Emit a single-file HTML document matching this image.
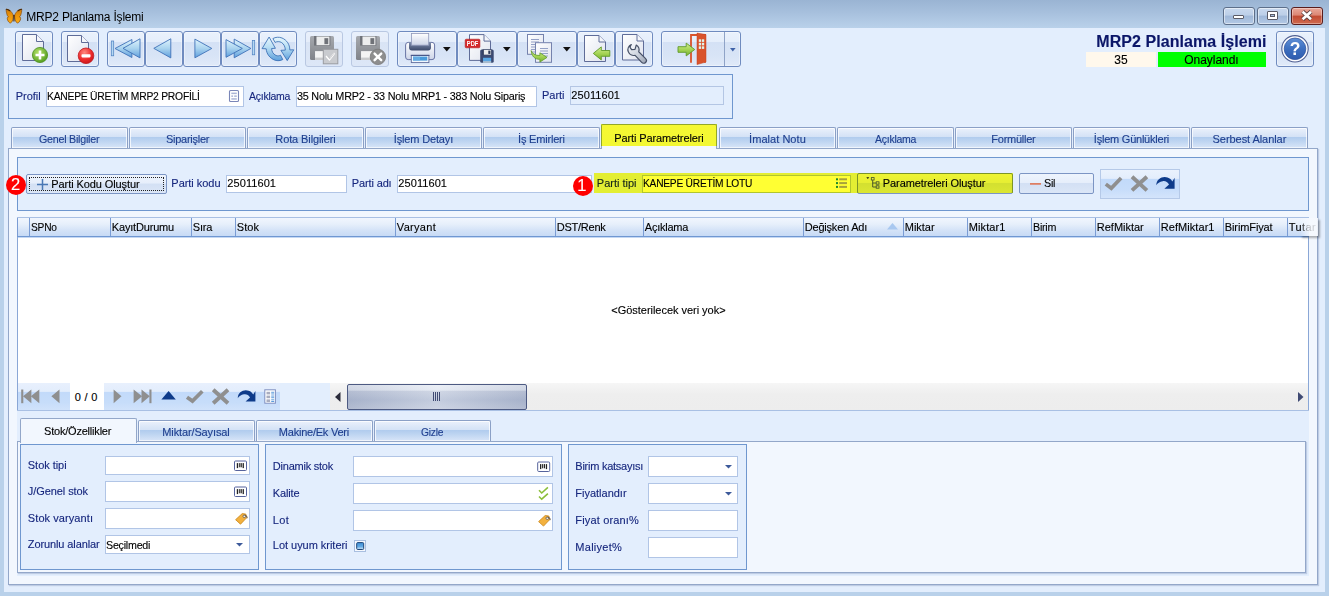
<!DOCTYPE html>
<html lang="tr"><head><meta charset="utf-8"><title>MRP2 Planlama İşlemi</title>
<style>
html,body{margin:0;padding:0;}
body{width:1329px;height:596px;overflow:hidden;position:relative;background:#e3eefd;font-family:"Liberation Sans", sans-serif;font-size:11px;}
body div{position:absolute;box-sizing:border-box;}
body svg{position:absolute;overflow:visible;}
.t{position:absolute;white-space:pre;transform-origin:0 50%;-webkit-text-stroke:0.12px;}

.tb{border:1px solid #6f8bbf;border-radius:3px;background:linear-gradient(#eaf1fc 0,#e5eefb 28%,#d4e1f5 30%,#d8e4f6 70%,#e0eaf9 100%);box-shadow:inset 0 0 0 1px rgba(255,255,255,.4);}
.tbd{border:1px solid #b9c8e2;border-radius:3px;background:linear-gradient(#e9f0fb 0,#e5edfa 28%,#d9e4f5 30%,#dde7f7 100%);}
.tab{border:1px solid #8ba0c6;border-bottom:none;border-radius:2px 2px 0 0;background:linear-gradient(#ebf1fc 0,#dde8f8 25%,#d4e2f6 44%,#b1ccee 47%,#bdd4f1 65%,#d8e5f8 100%);box-shadow:inset 1px 1px 0 rgba(255,255,255,.75), inset -1px 0 0 rgba(255,255,255,.75), inset 0 -1px 0 rgba(255,255,255,.6);}
.inp{border:1px solid #b1c5e6;background:#fff;}
.btn{border:1px solid #7c95c4;border-radius:2px;background:linear-gradient(#eef4fd 0,#e6eefb 45%,#d3e0f4 50%,#dbe6f7 100%);}
.grp{border:1px solid #6f97cf;background:#e3eefd;}
.hd{background:linear-gradient(#f1f6fe 0,#e6effb 35%,#d3e2f7 70%,#c7daf5 100%);border-left:1px solid #7a9cd4;}

</style></head><body>
<div style="left:0px;top:0px;width:1329px;height:596px;background:#b9d1ea;"></div>
<div style="left:0px;top:0px;width:1329px;height:28px;background:linear-gradient(#9ab4d3 0,#a7c0dd 45%,#b9d1ea 100%);"></div>
<div style="left:4px;top:28px;width:1321px;height:564px;background:#e3eefd;"></div>
<span class="t" id="t0" style="left:26.28px;top:11px;font-size:12px;line-height:12px;color:#000;letter-spacing:-0.203px;-webkit-text-stroke:0;">MRP2 Planlama İşlemi</span>
<div style="left:1223px;top:7px;width:32px;height:18px;border:1px solid #5d6f8a;border-radius:3px;background:linear-gradient(#c9d9ee 0,#bccfe8 45%,#9fb8d9 50%,#b3c9e5 100%);box-shadow:inset 0 0 0 1px rgba(255,255,255,.5);"></div>
<div style="left:1257px;top:7px;width:32px;height:18px;border:1px solid #5d6f8a;border-radius:3px;background:linear-gradient(#c9d9ee 0,#bccfe8 45%,#9fb8d9 50%,#b3c9e5 100%);box-shadow:inset 0 0 0 1px rgba(255,255,255,.5);"></div>
<div style="left:1291px;top:7px;width:32px;height:18px;border:1px solid #5a1d1c;border-radius:3px;background:linear-gradient(#e9a99b 0,#dc8674 45%,#c24a32 50%,#cf6a4f 100%);box-shadow:inset 0 0 0 1px rgba(255,255,255,.35);"></div>
<div style="left:1233px;top:15px;width:11px;height:4px;background:#fff;border:1px solid #5b5b66;border-radius:1px;"></div>
<div style="left:1267px;top:11px;width:11px;height:9px;background:#fff;border:1px solid #5b5b66;border-radius:1px;"></div>
<div style="left:1270px;top:14px;width:5px;height:3px;background:#a9bfdd;border:1px solid #5b5b66;"></div>
<svg style="left:1300px;top:10px" width="14" height="11" viewBox="0 0 14 11"><path d="M2.6 1.700L11 9.300M11 1.700L2.600 9.300" stroke="#5a4040" stroke-width="4.300" fill="none"/><path d="M2.600 1.700L11 9.300M11 1.700L2.600 9.300" stroke="#fff" stroke-width="2.700" fill="none"/></svg>
<div class="tb" style="left:15px;top:31px;width:38px;height:36px"></div>
<div class="tb" style="left:61px;top:31px;width:38px;height:36px"></div>
<div class="tb" style="left:107px;top:31px;width:38px;height:36px"></div>
<div class="tb" style="left:145px;top:31px;width:38px;height:36px"></div>
<div class="tb" style="left:183px;top:31px;width:38px;height:36px"></div>
<div class="tb" style="left:221px;top:31px;width:38px;height:36px"></div>
<div class="tb" style="left:259px;top:31px;width:38px;height:36px"></div>
<div class="tbd" style="left:305px;top:31px;width:38px;height:36px"></div>
<div class="tbd" style="left:351px;top:31px;width:38px;height:36px"></div>
<div class="tb" style="left:397px;top:31px;width:60px;height:36px"></div>
<div class="tb" style="left:457px;top:31px;width:60px;height:36px"></div>
<div class="tb" style="left:517px;top:31px;width:60px;height:36px"></div>
<div class="tb" style="left:577px;top:31px;width:38px;height:36px"></div>
<div class="tb" style="left:615px;top:31px;width:38px;height:36px"></div>
<div class="tb" style="left:661px;top:31px;width:80px;height:36px"></div>
<div class="tb" style="left:1276px;top:31px;width:38px;height:36px"></div>
<div style="left:724px;top:32px;width:1px;height:34px;background:#8fa3c7;"></div>
<svg style="left:442.6px;top:46.900px" width="8" height="5"><path d="M0 0h7.6L3.8 4.4z" fill="#111"/></svg>
<svg style="left:502.6px;top:46.900px" width="8" height="5"><path d="M0 0h7.6L3.8 4.4z" fill="#111"/></svg>
<svg style="left:562.6px;top:46.900px" width="8" height="5"><path d="M0 0h7.6L3.8 4.4z" fill="#111"/></svg>
<svg style="left:730px;top:48px" width="6" height="4"><path d="M0 0h5.600L2.800 3.600z" fill="#3f62a8"/></svg>
<span class="t" id="t1" style="left:1096.34px;top:34px;font-size:16px;line-height:16px;color:#0b1668;font-weight:bold;letter-spacing:0.065px;">MRP2 Planlama İşlemi</span>
<div style="left:1086px;top:52px;width:70px;height:15px;background:#fff8ec;"></div>
<div style="left:1158px;top:52px;width:108px;height:15px;background:#00ff00;"></div>
<span class="t" id="t2" style="left:1114.28px;top:54px;font-size:12px;line-height:12px;color:#000;letter-spacing:-0.020px;">35</span>
<span class="t" id="t3" style="left:1184.28px;top:54px;font-size:12px;line-height:12px;color:#000;letter-spacing:-0.043px;">Onaylandı</span>
<div style="left:8px;top:74px;width:725px;height:45px;border:1px solid #6f97cf;background:#e3eefd;"></div>
<span class="t" id="t4" style="left:15.84px;top:91px;font-size:11px;line-height:11px;color:#17277e;letter-spacing:-0.059px;">Profil</span>
<div class="inp" style="left:46px;top:86px;width:198px;height:21px"></div>
<span class="t" id="t5" style="left:47.34px;top:91px;font-size:11px;line-height:11px;color:#000;letter-spacing:-0.250px;transform:scaleX(0.9380);">KANEPE ÜRETİM MRP2 PROFİLİ</span>
<span class="t" id="t6" style="left:249.34px;top:91px;font-size:11px;line-height:11px;color:#17277e;letter-spacing:-0.250px;transform:scaleX(0.9528);">Açıklama</span>
<div class="inp" style="left:296px;top:86px;width:241px;height:21px"></div>
<span class="t" id="t7" style="left:297.34px;top:91px;font-size:11px;line-height:11px;color:#000;letter-spacing:-0.250px;transform:scaleX(0.9844);">35 Nolu MRP2 - 33 Nolu MRP1 - 383 Nolu Sipariş</span>
<span class="t" id="t8" style="left:542.04px;top:90px;font-size:11px;line-height:11px;color:#17277e;letter-spacing:-0.023px;">Parti</span>
<div style="left:570px;top:86px;width:154px;height:19px;border:1px solid #b4c6e4;background:#e3eefd"></div>
<span class="t" id="t9" style="left:571.34px;top:90px;font-size:11px;line-height:11px;color:#000;letter-spacing:0.073px;">25011601</span>
<div style="left:8px;top:148px;width:1310px;height:437px;border:1px solid #93a7c9;background:#f2f7fe;box-shadow:1px 1px 1px rgba(120,140,180,.35);"></div>
<div class="tab" style="left:11px;top:127px;width:117px;height:21px"></div>
<span class="t" id="t10" style="left:39.34px;top:134px;font-size:11px;line-height:11px;color:#1f3f8f;letter-spacing:-0.250px;transform:scaleX(0.9724);">Genel Bilgiler</span>
<div class="tab" style="left:129px;top:127px;width:117px;height:21px"></div>
<span class="t" id="t11" style="left:165.84px;top:134px;font-size:11px;line-height:11px;color:#1f3f8f;letter-spacing:-0.250px;transform:scaleX(0.9966);">Siparişler</span>
<div class="tab" style="left:247px;top:127px;width:117px;height:21px"></div>
<span class="t" id="t12" style="left:275.34px;top:134px;font-size:11px;line-height:11px;color:#1f3f8f;letter-spacing:-0.110px;">Rota Bilgileri</span>
<div class="tab" style="left:365px;top:127px;width:117px;height:21px"></div>
<span class="t" id="t13" style="left:393.84px;top:134px;font-size:11px;line-height:11px;color:#1f3f8f;letter-spacing:-0.161px;">İşlem Detayı</span>
<div class="tab" style="left:483px;top:127px;width:117px;height:21px"></div>
<span class="t" id="t14" style="left:518.09px;top:134px;font-size:11px;line-height:11px;color:#1f3f8f;letter-spacing:-0.198px;">İş Emirleri</span>
<div style="left:601px;top:124px;width:116px;height:25px;border:1px solid #93a7c9;border-bottom:none;border-radius:2px 2px 0 0;background:linear-gradient(#f6f8fd,#f2f7fe);"></div>
<span class="t" id="t15" style="left:614.34px;top:133px;font-size:11px;line-height:11px;color:#000;letter-spacing:-0.131px;">Parti Parametreleri</span>
<div class="tab" style="left:719px;top:127px;width:117px;height:21px"></div>
<span class="t" id="t16" style="left:749.09px;top:134px;font-size:11px;line-height:11px;color:#1f3f8f;letter-spacing:0.042px;">İmalat Notu</span>
<div class="tab" style="left:837px;top:127px;width:117px;height:21px"></div>
<span class="t" id="t17" style="left:874.84px;top:134px;font-size:11px;line-height:11px;color:#1f3f8f;letter-spacing:-0.250px;transform:scaleX(0.9528);">Açıklama</span>
<div class="tab" style="left:955px;top:127px;width:117px;height:21px"></div>
<span class="t" id="t18" style="left:991.34px;top:134px;font-size:11px;line-height:11px;color:#1f3f8f;letter-spacing:-0.249px;">Formüller</span>
<div class="tab" style="left:1073px;top:127px;width:117px;height:21px"></div>
<span class="t" id="t19" style="left:1093.84px;top:134px;font-size:11px;line-height:11px;color:#1f3f8f;letter-spacing:-0.228px;">İşlem Günlükleri</span>
<div class="tab" style="left:1191px;top:127px;width:117px;height:21px"></div>
<span class="t" id="t20" style="left:1212.59px;top:134px;font-size:11px;line-height:11px;color:#1f3f8f;letter-spacing:-0.060px;">Serbest Alanlar</span>
<div style="left:17px;top:157px;width:1292px;height:54px;border:1px solid #6f97cf;background:#e3eefd;"></div>
<div class="btn" style="left:26px;top:174px;width:141px;height:20px"></div>
<div style="left:29px;top:177px;width:135px;height:14px;border:1px dotted #222;"></div>
<svg style="left:37px;top:179px" width="11" height="11"><path d="M5.5 0v11M0 5.5h11" stroke="#4a78b5" stroke-width="1.5"/></svg>
<span class="t" id="t21" style="left:51.34px;top:179px;font-size:11px;line-height:11px;color:#000;letter-spacing:-0.093px;">Parti Kodu Oluştur</span>
<span class="t" id="t22" style="left:171.34px;top:178px;font-size:11px;line-height:11px;color:#17277e;letter-spacing:-0.032px;">Parti kodu</span>
<div class="inp" style="left:226px;top:175px;width:121px;height:18px"></div>
<span class="t" id="t23" style="left:227.34px;top:178px;font-size:11px;line-height:11px;color:#000;letter-spacing:0.073px;">25011601</span>
<span class="t" id="t24" style="left:351.84px;top:178px;font-size:11px;line-height:11px;color:#17277e;letter-spacing:-0.140px;">Parti adı</span>
<div class="inp" style="left:397px;top:175px;width:195px;height:18px"></div>
<span class="t" id="t25" style="left:398.34px;top:178px;font-size:11px;line-height:11px;color:#000;letter-spacing:0.073px;">25011601</span>
<span class="t" id="t26" style="left:596.84px;top:178px;font-size:11px;line-height:11px;color:#17277e;letter-spacing:-0.004px;">Parti tipi</span>
<div class="inp" style="left:642px;top:175px;width:209px;height:18px"></div>
<span class="t" id="t27" style="left:642.84px;top:178px;font-size:11px;line-height:11px;color:#000;letter-spacing:-0.250px;transform:scaleX(0.9275);">KANEPE ÜRETİM LOTU</span>
<div class="btn" style="left:857px;top:173px;width:156px;height:21px"></div>
<span class="t" id="t28" style="left:882.84px;top:178px;font-size:11px;line-height:11px;color:#000;letter-spacing:-0.102px;">Parametreleri Oluştur</span>
<div class="btn" style="left:1019px;top:173px;width:75px;height:21px"></div>
<svg style="left:1030px;top:183px" width="11" height="2"><rect x="0" y=".2" width="11" height="1.400" fill="#e0663f"/></svg>
<span class="t" id="t29" style="left:1044.34px;top:178px;font-size:11px;line-height:11px;color:#000;letter-spacing:-0.250px;transform:scaleX(0.9761);">Sil</span>
<div style="left:1100px;top:169px;width:80px;height:30px;border:1px solid #b5c9e8;background:linear-gradient(#eaf2fd 0,#e3edfc 30%,#c2dafa 33%,#c7ddfa 70%,#d4e4fb 100%);"></div>
<div style="left:594px;top:173px;width:419px;height:20px;background:#ffff33;mix-blend-mode:multiply;"></div>
<div style="left:601px;top:124px;width:116px;height:22px;background:#ffff33;mix-blend-mode:multiply;"></div>
<div style="left:6px;top:175px;width:20px;height:20px;border-radius:50%;background:#ff0000;"></div>
<span class="t" id="t30" style="left:10.91px;top:176px;font-size:16.5px;line-height:16.5px;color:#fff;letter-spacing:0.927px;">2</span>
<div style="left:573px;top:176px;width:20px;height:20px;border-radius:50%;background:#ff0000;"></div>
<span class="t" id="t31" style="left:577.21px;top:177px;font-size:16.5px;line-height:16.5px;color:#fff;letter-spacing:0.627px;">1</span>
<div style="left:17px;top:217px;width:1292px;height:359px;background:#e3eefd;"></div>
<div style="left:17px;top:217px;width:1292px;height:194px;background:#fff;border-left:1px solid #8aa7d6;border-right:1px solid #8aa7d6;"></div>
<div class="hd" style="left:17px;top:218px;width:12px;height:18px"></div>
<div class="hd" style="left:29px;top:218px;width:81px;height:18px"></div>
<span class="t" id="t32" style="left:30.84px;top:222px;font-size:11px;line-height:11px;color:#000;letter-spacing:-0.250px;transform:scaleX(0.9265);">SPNo</span>
<div class="hd" style="left:110px;top:218px;width:81px;height:18px"></div>
<span class="t" id="t33" style="left:111.84px;top:222px;font-size:11px;line-height:11px;color:#000;letter-spacing:-0.181px;">KayıtDurumu</span>
<div class="hd" style="left:191px;top:218px;width:44px;height:18px"></div>
<span class="t" id="t34" style="left:192.84px;top:222px;font-size:11px;line-height:11px;color:#000;letter-spacing:-0.244px;">Sıra</span>
<div class="hd" style="left:235px;top:218px;width:160px;height:18px"></div>
<span class="t" id="t35" style="left:236.84px;top:222px;font-size:11px;line-height:11px;color:#000;letter-spacing:0.049px;">Stok</span>
<div class="hd" style="left:395px;top:218px;width:160px;height:18px"></div>
<span class="t" id="t36" style="left:396.84px;top:222px;font-size:11px;line-height:11px;color:#000;letter-spacing:0.302px;">Varyant</span>
<div class="hd" style="left:555px;top:218px;width:88px;height:18px"></div>
<span class="t" id="t37" style="left:556.84px;top:222px;font-size:11px;line-height:11px;color:#000;letter-spacing:-0.255px;">DST/Renk</span>
<div class="hd" style="left:643px;top:218px;width:160px;height:18px"></div>
<span class="t" id="t38" style="left:644.84px;top:222px;font-size:11px;line-height:11px;color:#000;letter-spacing:-0.255px;">Açıklama</span>
<div class="hd" style="left:803px;top:218px;width:100px;height:18px"></div>
<span class="t" id="t39" style="left:804.84px;top:222px;font-size:11px;line-height:11px;color:#000;letter-spacing:-0.218px;">Değişken Adı</span>
<div class="hd" style="left:903px;top:218px;width:64px;height:18px"></div>
<span class="t" id="t40" style="left:904.84px;top:222px;font-size:11px;line-height:11px;color:#000;letter-spacing:-0.041px;">Miktar</span>
<div class="hd" style="left:967px;top:218px;width:64px;height:18px"></div>
<span class="t" id="t41" style="left:968.84px;top:222px;font-size:11px;line-height:11px;color:#000;letter-spacing:0.093px;">Miktar1</span>
<div class="hd" style="left:1031px;top:218px;width:64px;height:18px"></div>
<span class="t" id="t42" style="left:1032.84px;top:222px;font-size:11px;line-height:11px;color:#000;letter-spacing:-0.250px;transform:scaleX(0.9747);">Birim</span>
<div class="hd" style="left:1095px;top:218px;width:64px;height:18px"></div>
<span class="t" id="t43" style="left:1096.84px;top:222px;font-size:11px;line-height:11px;color:#000;letter-spacing:-0.017px;">RefMiktar</span>
<div class="hd" style="left:1159px;top:218px;width:64px;height:18px"></div>
<span class="t" id="t44" style="left:1160.84px;top:222px;font-size:11px;line-height:11px;color:#000;letter-spacing:0.052px;">RefMiktar1</span>
<div class="hd" style="left:1223px;top:218px;width:64px;height:18px"></div>
<span class="t" id="t45" style="left:1224.84px;top:222px;font-size:11px;line-height:11px;color:#000;letter-spacing:-0.118px;">BirimFiyat</span>
<div class="hd" style="left:1287px;top:218px;width:22px;height:18px"></div>
<span class="t" id="t46" style="left:1288.84px;top:222px;font-size:11px;line-height:11px;color:#000;letter-spacing:0.389px;">Tutar</span>
<div style="left:17px;top:217px;width:1292px;height:1px;background:#a9c0e4;"></div>
<div style="left:17px;top:236px;width:1292px;height:1px;background:#6f97d2;"></div>
<div style="left:18px;top:237px;width:1290px;height:1px;background:#c5d8f3;"></div>
<svg style="left:887px;top:223px" width="11" height="7"><path d="M0 6.5L5.5 0 11 6.5z" fill="#a8c8f0"/></svg>
<span class="t" id="t47" style="left:611.34px;top:305px;font-size:11px;line-height:11px;color:#000;letter-spacing:-0.032px;">&lt;Gösterilecek veri yok&gt;</span>
<div style="left:1300px;top:218px;width:18px;height:18px;background:linear-gradient(90deg,rgba(246,249,254,0) 0,rgba(246,249,254,.75) 45%,rgba(246,249,254,.9) 100%);box-shadow:2px 2px 2px rgba(0,0,0,.3);"></div>
<div style="left:18px;top:383px;width:262px;height:28px;background:linear-gradient(#e8f0fd 0,#e3edfc 30%,#c2dafa 33%,#c7ddfa 70%,#d2e3fb 100%);"></div>
<div style="left:70px;top:383px;width:34px;height:28px;background:#fff;"></div>
<span class="t" id="t48" style="left:74.84px;top:392px;font-size:11px;line-height:11px;color:#000;letter-spacing:0.261px;">0 / 0</span>
<div style="left:280px;top:383px;width:50px;height:28px;background:#e3eefd;"></div>
<div style="left:330px;top:383px;width:978px;height:28px;background:linear-gradient(#f6f6f6 0,#eeeeee 40%,#ededed 100%);"></div>
<div style="left:17px;top:410px;width:1292px;height:1px;background:#a9c0e4;"></div>
<div style="left:347px;top:384px;width:180px;height:26px;border:1px solid #4d5a82;border-radius:2px;background:linear-gradient(90deg,rgba(60,70,110,.10) 0,rgba(255,255,255,.22) 50%,rgba(60,70,110,.10) 100%),linear-gradient(#e6ebf4 0,#dfe5f0 22%,#c3ccde 25%,#b3bed5 62%,#c0c9dc 100%);"></div>
<svg style="left:335px;top:392px" width="6" height="10"><path d="M5.5 0v10L0 5z" fill="#2c2c3a"/></svg>
<svg style="left:1298px;top:392px" width="6" height="10"><path d="M0 0v10l5.5-5z" fill="#3f4a73"/></svg>
<div style="left:433px;top:392px;width:1px;height:9px;background:#3f4a73;"></div>
<div style="left:435px;top:392px;width:1px;height:9px;background:#3f4a73;"></div>
<div style="left:437px;top:392px;width:1px;height:9px;background:#3f4a73;"></div>
<div style="left:439px;top:392px;width:1px;height:9px;background:#3f4a73;"></div>
<div style="left:17px;top:441px;width:1289px;height:132px;border:1px solid #93a7c9;background:#f2f7fe;box-shadow:1px 1px 1px rgba(120,140,180,.35);"></div>
<div style="left:20px;top:418px;width:117px;height:25px;border:1px solid #93a7c9;border-bottom:none;border-radius:2px 2px 0 0;background:#f2f7fe;"></div>
<span class="t" id="t49" style="left:44.04px;top:426px;font-size:11px;line-height:11px;color:#000;letter-spacing:-0.206px;">Stok/Özellikler</span>
<div class="tab" style="left:138px;top:420px;width:117px;height:21px"></div>
<span class="t" id="t50" style="left:162.34px;top:427px;font-size:11px;line-height:11px;color:#1f3f8f;letter-spacing:-0.133px;">Miktar/Sayısal</span>
<div class="tab" style="left:256px;top:420px;width:117px;height:21px"></div>
<span class="t" id="t51" style="left:278.84px;top:427px;font-size:11px;line-height:11px;color:#1f3f8f;letter-spacing:-0.226px;">Makine/Ek Veri</span>
<div class="tab" style="left:374px;top:420px;width:117px;height:21px"></div>
<span class="t" id="t52" style="left:420.84px;top:427px;font-size:11px;line-height:11px;color:#1f3f8f;letter-spacing:-0.250px;transform:scaleX(0.9327);">Gizle</span>
<div class="grp" style="left:20px;top:444px;width:239px;height:126px"></div>
<div class="grp" style="left:265px;top:444px;width:297px;height:126px"></div>
<div class="grp" style="left:568px;top:444px;width:179px;height:126px"></div>
<span class="t" id="t53" style="left:27.84px;top:460px;font-size:11px;line-height:11px;color:#17277e;letter-spacing:-0.048px;">Stok tipi</span>
<div class="inp" style="left:105px;top:456px;width:145px;height:19px"></div>
<span class="t" id="t54" style="left:27.84px;top:486px;font-size:11px;line-height:11px;color:#17277e;letter-spacing:-0.078px;">J/Genel stok</span>
<div class="inp" style="left:105px;top:481px;width:145px;height:21px"></div>
<span class="t" id="t55" style="left:27.84px;top:513px;font-size:11px;line-height:11px;color:#17277e;letter-spacing:0.077px;">Stok varyantı</span>
<div class="inp" style="left:105px;top:508px;width:145px;height:21px"></div>
<span class="t" id="t56" style="left:27.84px;top:539px;font-size:11px;line-height:11px;color:#17277e;letter-spacing:-0.111px;">Zorunlu alanlar</span>
<div class="inp" style="left:105px;top:535px;width:145px;height:19px"></div>
<span class="t" id="t57" style="left:106.34px;top:540px;font-size:11px;line-height:11px;color:#000;letter-spacing:-0.250px;transform:scaleX(0.9730);">Seçilmedi</span>
<span class="t" id="t58" style="left:272.84px;top:461px;font-size:11px;line-height:11px;color:#17277e;letter-spacing:-0.230px;">Dinamik stok</span>
<div class="inp" style="left:353px;top:456px;width:200px;height:21px"></div>
<span class="t" id="t59" style="left:272.84px;top:488px;font-size:11px;line-height:11px;color:#17277e;letter-spacing:-0.137px;">Kalite</span>
<div class="inp" style="left:353px;top:483px;width:200px;height:21px"></div>
<span class="t" id="t60" style="left:272.84px;top:515px;font-size:11px;line-height:11px;color:#17277e;letter-spacing:0.304px;">Lot</span>
<div class="inp" style="left:353px;top:510px;width:200px;height:21px"></div>
<span class="t" id="t61" style="left:272.84px;top:540px;font-size:11px;line-height:11px;color:#17277e;letter-spacing:-0.031px;">Lot uyum kriteri</span>
<span class="t" id="t62" style="left:575.34px;top:461px;font-size:11px;line-height:11px;color:#17277e;letter-spacing:-0.250px;">Birim katsayısı</span>
<div class="inp" style="left:648px;top:456px;width:90px;height:21px"></div>
<span class="t" id="t63" style="left:575.34px;top:488px;font-size:11px;line-height:11px;color:#17277e;letter-spacing:-0.014px;">Fiyatlandır</span>
<div class="inp" style="left:648px;top:483px;width:90px;height:21px"></div>
<span class="t" id="t64" style="left:575.34px;top:515px;font-size:11px;line-height:11px;color:#17277e;letter-spacing:0.163px;">Fiyat oranı%</span>
<div class="inp" style="left:648px;top:510px;width:90px;height:21px"></div>
<span class="t" id="t65" style="left:575.34px;top:542px;font-size:11px;line-height:11px;color:#17277e;letter-spacing:0.261px;">Maliyet%</span>
<div class="inp" style="left:648px;top:537px;width:90px;height:21px"></div>
<svg style="left:236px;top:543px" width="7" height="4"><path d="M0 0h7L3.5 3.5z" fill="#3d5a9a"/></svg>
<svg style="left:725px;top:465px" width="7" height="4"><path d="M0 0h7L3.5 3.5z" fill="#3d5a9a"/></svg>
<svg style="left:725px;top:492px" width="7" height="4"><path d="M0 0h7L3.5 3.5z" fill="#3d5a9a"/></svg>
<svg style="left:0;top:0" width="1329" height="596" viewBox="0 0 1329 596"><defs>
<linearGradient id="gPage" x1="0" y1="0" x2="1" y2="1"><stop offset="0" stop-color="#ffffff"/><stop offset="1" stop-color="#dfe3ee"/></linearGradient>
<linearGradient id="gTri" x1="0" y1="0" x2="0" y2="1"><stop offset="0" stop-color="#dff3fc"/><stop offset=".5" stop-color="#a9d3ef"/><stop offset="1" stop-color="#5f9fdc"/></linearGradient>
<linearGradient id="gTriL" x1="0" y1="0" x2="1" y2="0"><stop offset="0" stop-color="#d4ecfa"/><stop offset="1" stop-color="#5b9bd8"/></linearGradient>
<linearGradient id="gTriR" x1="1" y1="0" x2="0" y2="0"><stop offset="0" stop-color="#d4ecfa"/><stop offset="1" stop-color="#6aa6de"/></linearGradient>
<radialGradient id="gGreen" cx=".4" cy=".35" r=".7"><stop offset="0" stop-color="#b6e36a"/><stop offset="1" stop-color="#4f9a1c"/></radialGradient>
<radialGradient id="gRed" cx=".4" cy=".3" r=".75"><stop offset="0" stop-color="#ff8a80"/><stop offset=".6" stop-color="#ee2a2a"/><stop offset="1" stop-color="#c4151b"/></radialGradient>
<linearGradient id="gRef" gradientUnits="userSpaceOnUse" x1="0" y1="37" x2="0" y2="61"><stop offset="0" stop-color="#e8f7fd"/><stop offset=".45" stop-color="#b5dcf3"/><stop offset="1" stop-color="#5a9edb"/></linearGradient>
<linearGradient id="gGray" x1="0" y1="0" x2="0" y2="1"><stop offset="0" stop-color="#a6a9ae"/><stop offset="1" stop-color="#808389"/></linearGradient>
<linearGradient id="gArrowG" x1="0" y1="0" x2="0" y2="1"><stop offset="0" stop-color="#d3ee96"/><stop offset=".5" stop-color="#a5d455"/><stop offset="1" stop-color="#74b030"/></linearGradient>
<linearGradient id="gHelp" x1="0" y1="0" x2="0" y2="1"><stop offset="0" stop-color="#5f8fd6"/><stop offset=".5" stop-color="#3d6fc0"/><stop offset="1" stop-color="#2f5cae"/></linearGradient>
<linearGradient id="gPrn" x1="0" y1="0" x2="0" y2="1"><stop offset="0" stop-color="#ffffff"/><stop offset="1" stop-color="#cdd5e8"/></linearGradient>
<linearGradient id="gWr" x1="0" y1="0" x2="1" y2="1"><stop offset="0" stop-color="#f2f4f8"/><stop offset=".5" stop-color="#cfd5df"/><stop offset="1" stop-color="#98a1b2"/></linearGradient>
<linearGradient id="gSlot" x1="0" y1="0" x2="0" y2="1"><stop offset="0" stop-color="#8290b0"/><stop offset="1" stop-color="#3c496b"/></linearGradient><linearGradient id="gBf" x1="0" y1="0" x2="0" y2="1"><stop offset="0" stop-color="#cf7a08"/><stop offset=".45" stop-color="#ea940c"/><stop offset="1" stop-color="#fbab14"/></linearGradient><linearGradient id="gChk" x1="0" y1="0" x2="0" y2="1"><stop offset="0" stop-color="#3f8fd6"/><stop offset=".55" stop-color="#5fa8e4"/><stop offset="1" stop-color="#cfe6f8"/></linearGradient></defs><path d="M22.5 34.5H36.5L43.5 41.5V60.5H22.5z" fill="url(#gPage)" stroke="#5f6c98" stroke-width="1" stroke-linejoin="round"/>
<path d="M36.5 34.5V41.5H43.5" fill="#f4f6fb" stroke="#5f6c98" stroke-width="1" stroke-linejoin="round"/>
<circle cx="40" cy="55" r="7.6" fill="url(#gGreen)" stroke="#4b8f1e" stroke-width=".8"/>
<path d="M40 50.5v9M35.5 55h9" stroke="#fff" stroke-width="2.6"/>
<path d="M67.5 35.5H81.5L88.5 42.5V61.5H67.5z" fill="url(#gPage)" stroke="#5f6c98" stroke-width="1" stroke-linejoin="round"/>
<path d="M81.5 35.5V42.5H88.5" fill="#f4f6fb" stroke="#5f6c98" stroke-width="1" stroke-linejoin="round"/>
<circle cx="86" cy="55.8" r="7.8" fill="url(#gRed)" stroke="#c01a1f" stroke-width=".8"/>
<rect x="81.5" y="54.2" width="9" height="3.2" rx=".8" fill="#fff"/>
<rect x="111.3" y="41" width="2.4" height="14.8" fill="#b5d8f2" stroke="#4c7fc0" stroke-width=".7"/>
<path d="M115 48.5L131.9 39.5V57.5z" fill="url(#gTri)" stroke="#3f72b8" stroke-width=".9" stroke-linejoin="round"/>
<path d="M123 48.349999999999994L140 38.8V57.9z" fill="url(#gTri)" stroke="#3f72b8" stroke-width=".9" stroke-linejoin="round"/>
<path d="M153.8 48.349999999999994L170.8 38.8V57.9z" fill="url(#gTri)" stroke="#3f72b8" stroke-width=".9" stroke-linejoin="round"/>
<path d="M211.8 48.45L194.9 39.1V57.8z" fill="url(#gTri)" stroke="#3f72b8" stroke-width=".9" stroke-linejoin="round"/>
<path d="M250.9 48.45L234.2 39.1V57.8z" fill="url(#gTri)" stroke="#3f72b8" stroke-width=".9" stroke-linejoin="round"/>
<path d="M242.3 48.45L226 39.6V57.3z" fill="url(#gTri)" stroke="#3f72b8" stroke-width=".9" stroke-linejoin="round"/>
<rect x="252.3" y="40.5" width="2.4" height="14.3" fill="#b5d8f2" stroke="#4c7fc0" stroke-width=".7"/>
<path d="M269.100 37L275.400 48.300L271.600 48.500C271.800 51.500 273 54 276 55.500C277.500 56.100 279 56 280.500 55.200L282.800 59.500C280.500 60.800 277.500 61 275 60.200C270 58.500 266.500 54 266.200 48.800L262.100 48.600Z" fill="url(#gRef)" stroke="#2f66ae" stroke-width=".8" stroke-linejoin="round"/>
<path d="M287.250 60.600L280.900 50.300L285.300 50.100C285.300 47 284 44 281.500 42.500C279.500 41.300 277 41.400 275.100 42.400L272.900 38.600C275.500 37 279 36.800 282 38C286.800 40 289.800 44.500 289.800 49.900L293.750 49.800Z" fill="url(#gRef)" stroke="#2f66ae" stroke-width=".8" stroke-linejoin="round"/>
<g opacity="1"><rect x="310" y="36" width="24" height="24" rx="1.5" fill="url(#gGray)"/><rect x="314.08" y="36" width="16.32" height="9.600000000000001" fill="#6f7278"/><rect x="316.48" y="36.5" width="12.96" height="8.64" fill="#eceded"/><rect x="324.4" y="38.16" width="3.84" height="6.0" fill="#6f7278"/><rect x="315.04" y="51.120000000000005" width="14.399999999999999" height="8.879999999999999" fill="#f4f4f4"/><rect x="315.04" y="57.6" width="14.399999999999999" height="2.4000000000000004" fill="#c9cacc"/></g>
<rect x="323.300" y="49.300" width="14.500" height="14.500" fill="#c9cbcf" stroke="#9a9ca1" stroke-width="1"/>
<path d="M326.600 56.400l2.800 3.300 4.800-6.200" fill="none" stroke="#fff" stroke-width="1.800" stroke-linecap="round" stroke-linejoin="round"/>
<path d="M326.600 56.400l2.800 3.300 4.800-6.200" fill="none" stroke="#8b8d92" stroke-width=".5" transform="translate(.4,-.9)" opacity=".8"/>
<g opacity="1"><rect x="356" y="36" width="24" height="24" rx="1.5" fill="url(#gGray)"/><rect x="360.08" y="36" width="16.32" height="9.600000000000001" fill="#6f7278"/><rect x="362.48" y="36.5" width="12.96" height="8.64" fill="#eceded"/><rect x="370.4" y="38.16" width="3.84" height="6.0" fill="#6f7278"/><rect x="361.04" y="51.120000000000005" width="14.399999999999999" height="8.879999999999999" fill="#f4f4f4"/><rect x="361.04" y="57.6" width="14.399999999999999" height="2.4000000000000004" fill="#c9cacc"/></g>
<circle cx="377.900" cy="56.900" r="7.700" fill="#8e8e8e" stroke="#7a7a7a" stroke-width=".8"/>
<path d="M374.600 53.600l6.600 6.600M381.200 53.600l-6.600 6.600" stroke="#fff" stroke-width="2.400" stroke-linecap="round"/>
<rect x="405.600" y="42.400" width="29" height="17.200" rx="2.600" fill="url(#gPrn)" stroke="#6874a4" stroke-width="1"/>
<path d="M409 42.100h22v5.600c0 1.600-1.200 2.700-2.800 2.700h-16.400c-1.600 0-2.800-1.100-2.800-2.700z" fill="url(#gSlot)"/>
<rect x="411.500" y="33.400" width="17.200" height="11.800" fill="url(#gPrn)" stroke="#8f98ba" stroke-width=".8"/>
<rect x="411.300" y="55.300" width="17.600" height="7.300" fill="#f1f7fd" stroke="#5f6c9c" stroke-width=".9"/>
<rect x="410.800" y="54.900" width="18.600" height="1.100" fill="#4a5888"/>
<rect x="413" y="56.600" width="14.300" height="4" fill="#4a9bdb"/>
<rect x="413" y="56.600" width="7" height="4" fill="#6db2e6" opacity=".7"/>
<path d="M469.5 34.6H484.0L490.5 41.1V60.4H469.5z" fill="url(#gPage)" stroke="#5f6c98" stroke-width="1" stroke-linejoin="round"/>
<path d="M484.0 34.6V41.1H490.5" fill="#f4f6fb" stroke="#5f6c98" stroke-width="1" stroke-linejoin="round"/>
<rect x="465.200" y="39.200" width="14.700" height="8.600" rx="1" fill="#d5282a" stroke="#b01d20" stroke-width=".6"/>
<text x="472.550" y="46.100" font-family="Liberation Sans, sans-serif" font-size="6.500" font-weight="bold" fill="#fff" text-anchor="middle" textLength="11.500" lengthAdjust="spacingAndGlyphs">PDF</text>
<g opacity="1"><rect x="480.2" y="49.4" width="13.5" height="13.3" rx="1.5" fill="#3b4a72"/><rect x="482.495" y="49.4" width="9.180000000000001" height="5.32" fill="#2c3858"/><rect x="483.84499999999997" y="49.9" width="7.290000000000001" height="4.788" fill="#eceded"/><rect x="488.3" y="50.597" width="2.16" height="3.325" fill="#2c3858"/><rect x="483.03499999999997" y="57.778999999999996" width="8.1" height="4.921" fill="#58a6e4"/><rect x="483.03499999999997" y="61.37" width="8.1" height="1.33" fill="#c9cacc"/></g>
<rect x="527.500" y="34.500" width="16" height="19.800" fill="url(#gPage)" stroke="#7582ad" stroke-width="1"/>
<rect x="531" y="39.0" width="8" height="1" fill="#93a0c6"/>
<rect x="531" y="41.5" width="8" height="1" fill="#93a0c6"/>
<rect x="531" y="44.0" width="8" height="1" fill="#93a0c6"/>
<rect x="531" y="46.5" width="8" height="1" fill="#93a0c6"/>
<rect x="531" y="49.0" width="8" height="1" fill="#93a0c6"/>
<rect x="531" y="51.5" width="8" height="1" fill="#93a0c6"/>
<rect x="535.500" y="42.700" width="16" height="19.600" fill="url(#gPage)" stroke="#7582ad" stroke-width="1"/>
<rect x="540" y="48.0" width="8" height="1" fill="#93a0c6"/>
<rect x="540" y="50.5" width="8" height="1" fill="#93a0c6"/>
<rect x="540" y="53.0" width="8" height="1" fill="#93a0c6"/>
<rect x="540" y="55.5" width="8" height="1" fill="#93a0c6"/>
<path d="M531.200 50.600c1 3.400 4.300 5 8.700 4.900v-2.700l7.100 4.600-7.100 4.700v-2.800c-5.300.3-8.300-3.400-8.700-8.700z" fill="url(#gArrowG)" stroke="#5f9a28" stroke-width=".8" stroke-linejoin="round"/>
<path d="M584.5 35.5H599.0L605.5 42.0V61.5H584.5z" fill="url(#gPage)" stroke="#5f6c98" stroke-width="1" stroke-linejoin="round"/>
<path d="M599.0 35.5V42.0H605.5" fill="#f4f6fb" stroke="#5f6c98" stroke-width="1" stroke-linejoin="round"/>
<path d="M593.300 53.400l8-6.500v3.600h8.500v5.800h-8.500v3.600z" fill="url(#gArrowG)" stroke="#5f9a28" stroke-width=".9" stroke-linejoin="round"/>
<path d="M622.5 34.5H637.0L643.5 41.0V60H622.5z" fill="url(#gPage)" stroke="#5f6c98" stroke-width="1" stroke-linejoin="round"/>
<path d="M637.0 34.5V41.0H643.5" fill="#f4f6fb" stroke="#5f6c98" stroke-width="1" stroke-linejoin="round"/>
<path d="M632.600 45.600c-2.500 1.100-3.900 4-2.900 6.700 1 2.700 3.800 4.200 6.500 3.500l6.200 6.700c1 1.100 2.700 1.100 3.700.1 1-1 1-2.600 0-3.600l-6.500-6.500c.8-2.500-.2-5.100-2.300-6.400l-1.200 4.100-3.200.3-1.600-2.400z" fill="url(#gWr)" stroke="#465066" stroke-width="1.100" stroke-linejoin="round" transform="translate(645.5 62.7) scale(1.06) translate(-646 -62.8)"/>
<path d="M690.100 62.700V34.100h15.800v28.600h-1.800V35.900h-12.200v26.800z" fill="#d9532c"/>
<path d="M697 33.100l9 1.500v27.400l-9 2.600z" fill="#d9532c" stroke="#c4431f" stroke-width=".5"/>
<rect x="698.8" y="39.3" width="2.300" height="2.600" fill="#dff3ea"/>
<rect x="701.9" y="39.3" width="2.300" height="2.600" fill="#dff3ea"/>
<rect x="698.8" y="42.8" width="2.300" height="2.600" fill="#dff3ea"/>
<rect x="701.9" y="42.8" width="2.300" height="2.600" fill="#dff3ea"/>
<rect x="698.8" y="46.3" width="2.300" height="2.600" fill="#dff3ea"/>
<rect x="701.9" y="46.3" width="2.300" height="2.600" fill="#dff3ea"/>
<path d="M694.700 49.500l-8.500 6.400v-3.600h-8.200v-5.600h8.200v-3.600z" fill="url(#gArrowG)" stroke="#5f9a28" stroke-width=".9" stroke-linejoin="round"/>
<circle cx="1295" cy="48.800" r="13.200" fill="#fdfdff" stroke="#4f5f92" stroke-width="1.100"/>
<circle cx="1295" cy="48.800" r="10.800" fill="url(#gHelp)" stroke="#2c4f9a" stroke-width=".7"/>
<text x="1295" y="55" font-family="Liberation Sans, sans-serif" font-size="17.500" font-weight="bold" fill="#fff" text-anchor="middle">?</text>
<g><path d="M13.300 15.600C12.600 12.600 9.600 9.300 6.300 9.200 5.900 10.900 6.700 13.500 7.300 15.400 7.500 16.100 7.900 16.500 8.500 16.700 7.600 17 7.200 17.800 7.300 18.800 7.500 20.500 8.500 22 9.700 22.800 10.600 23.300 11.500 22.600 12.200 21.200 12.800 20 13.200 18.500 13.300 17.200z" fill="url(#gBf)" stroke="#8a4a06" stroke-width=".7" stroke-linejoin="round"/><path d="M6.300 9.200C7.600 9.300 8.800 9.900 9.800 10.700" fill="none" stroke="#4a2a08" stroke-width="1.100" stroke-linecap="round"/></g>
<g transform="translate(27.900 0) scale(-1 1)"><path d="M13.300 15.600C12.600 12.600 9.600 9.300 6.300 9.200 5.900 10.900 6.700 13.500 7.300 15.400 7.500 16.100 7.900 16.500 8.500 16.700 7.600 17 7.200 17.800 7.300 18.800 7.500 20.500 8.500 22 9.700 22.800 10.600 23.300 11.500 22.600 12.200 21.200 12.800 20 13.200 18.500 13.300 17.200z" fill="url(#gBf)" stroke="#8a4a06" stroke-width=".7" stroke-linejoin="round"/><path d="M6.300 9.200C7.600 9.300 8.800 9.900 9.800 10.700" fill="none" stroke="#4a2a08" stroke-width="1.100" stroke-linecap="round"/></g>
<path d="M13.950 15.200v5.800" stroke="#3a2010" stroke-width="1.100" stroke-linecap="round"/>
<rect x="229.500" y="90.500" width="9" height="11" rx="1" fill="#fff" stroke="#7a86b8" stroke-width="1.100"/>
<rect x="231.300" y="92.600" width="5.500" height="1.500" fill="#aab4d6"/><rect x="231.300" y="95.400" width="1.800" height="1.500" fill="#aab4d6"/><rect x="234.200" y="95.400" width="2.600" height="1.500" fill="#aab4d6"/><rect x="231.300" y="98.200" width="5.500" height="1.500" fill="#aab4d6"/>
<rect x="836" y="178.3" width="2" height="2" fill="#1f8a2a"/><rect x="839.200" y="178.3" width="7.800" height="2" fill="#a7a13a"/>
<rect x="836" y="182.10000000000002" width="2" height="2" fill="#1f8a2a"/><rect x="839.200" y="182.10000000000002" width="7.800" height="2" fill="#a7a13a"/>
<rect x="836" y="185.9" width="2" height="2" fill="#1f8a2a"/><rect x="839.200" y="185.9" width="7.800" height="2" fill="#a7a13a"/>
<path d="M866.300 177.200h3l-1.500 1.900z" fill="#111"/>
<rect x="871.300" y="177.600" width="2.800" height="2.400" fill="none" stroke="#3c4a2a" stroke-width=".8"/>
<path d="M872.700 180.200v6.800h3.300M872.700 183h3.300" fill="none" stroke="#3c4a2a" stroke-width=".9"/>
<rect x="876.200" y="181.800" width="2.800" height="2.400" fill="none" stroke="#3c4a2a" stroke-width=".8"/>
<rect x="876.200" y="185.800" width="2.800" height="2.400" fill="none" stroke="#3c4a2a" stroke-width=".8"/>
<path d="M1105.8000000000002 184.12L1111.278 188.29999999999998L1121.1 177.89999999999998" fill="none" stroke="#8f8f8f" stroke-width="3.7" stroke-linejoin="miter"/>
<path d="M1132.0 176.7L1146.9 190.4M1146.9 176.7L1132.0 190.4" fill="none" stroke="#8f8f8f" stroke-width="3.9"/>
<path d="M1156.3 185.2C1156.2 178.45 1163.068 175.6 1167.532 177.45C1169.764 178.075 1171.4379999999999 179.7 1172.368 181.45L1174.6 177.7V188.7H1164.37L1169.02 184.45C1167.532 181.95 1165.3 180.7 1162.696 181.2C1159.72 181.7 1157.488 183.2 1156.3 185.2z" fill="#0e3b8a"/>
<rect x="21.200" y="389.500" width="2.100" height="13.700" fill="#8f8f8f"/>
<path d="M23 396.35L31.4 389.5V403.2z" fill="#8f8f8f"/>
<path d="M30.8 396.35L39.3 389.5V403.2z" fill="#8f8f8f"/>
<path d="M51.4 396.35L59.5 389.5V403.2z" fill="#8f8f8f"/>
<path d="M121.5 396.35L113.6 389.5V403.2z" fill="#8f8f8f"/>
<path d="M142.1 396.35L133.6 389.5V403.2z" fill="#8f8f8f"/>
<path d="M149.8 396.35L141.5 389.5V403.2z" fill="#8f8f8f"/>
<rect x="149.400" y="389.500" width="2.100" height="13.700" fill="#8f8f8f"/>
<path d="M161.400 399.500L168.600 391l7.200 8.500z" fill="#0e3b8a"/>
<path d="M187.0 397.145L192.47799999999998 401.09999999999997L202.29999999999998 391.2" fill="none" stroke="#8f8f8f" stroke-width="3.7" stroke-linejoin="miter"/>
<path d="M213.2 389.7L228.0 403.2M228.0 389.7L213.2 403.2" fill="none" stroke="#8f8f8f" stroke-width="3.9"/>
<path d="M237.8 398.212C237.7 391.678 244.302 388.9 248.598 390.71C250.746 391.315 252.357 392.88800000000003 253.252 394.582L255.4 390.952V401.6H245.555L250.03 397.486C248.598 395.06600000000003 246.45 393.856 243.944 394.34000000000003C241.08 394.824 238.932 396.276 237.8 398.212z" fill="#0e3b8a"/>
<rect x="264.800" y="389.800" width="10.600" height="13.400" fill="#fff" stroke="#7f8fc0" stroke-width="1"/>
<rect x="266.500" y="391.8" width="3.600" height="2.600" fill="#a9adbf"/><rect x="271.200" y="391.8" width="3" height=".9" fill="#4a90d9"/><rect x="271.200" y="393.5" width="3" height=".9" fill="#4a90d9"/>
<rect x="266.500" y="395.6" width="3.600" height="2.600" fill="#a9adbf"/><rect x="271.200" y="395.6" width="3" height=".9" fill="#4a90d9"/><rect x="271.200" y="397.3" width="3" height=".9" fill="#4a90d9"/>
<rect x="266.500" y="399.40000000000003" width="3.600" height="2.600" fill="#a9adbf"/><rect x="271.200" y="399.40000000000003" width="3" height=".9" fill="#4a90d9"/><rect x="271.200" y="401.1" width="3" height=".9" fill="#4a90d9"/>
<rect x="234.5" y="461.0" width="12" height="9.500" rx="1" fill="#fff" stroke="#56639c" stroke-width="1"/>
<rect x="236.8" y="463.1" width="1.3" height="5" fill="#222"/>
<rect x="238.9" y="463.1" width="0.9" height="4.2" fill="#222"/>
<rect x="240.5" y="463.1" width="1.3" height="4.2" fill="#222"/>
<rect x="242.6" y="463.1" width="1.3" height="5" fill="#222"/>
<rect x="234.5" y="487.0" width="12" height="9.500" rx="1" fill="#fff" stroke="#56639c" stroke-width="1"/>
<rect x="236.8" y="489.1" width="1.3" height="5" fill="#222"/>
<rect x="238.9" y="489.1" width="0.9" height="4.2" fill="#222"/>
<rect x="240.5" y="489.1" width="1.3" height="4.2" fill="#222"/>
<rect x="242.6" y="489.1" width="1.3" height="5" fill="#222"/>
<rect x="537.7" y="462.0" width="12" height="9.500" rx="1" fill="#fff" stroke="#56639c" stroke-width="1"/>
<rect x="540.0" y="464.1" width="1.3" height="5" fill="#222"/>
<rect x="542.1" y="464.1" width="0.9" height="4.2" fill="#222"/>
<rect x="543.7" y="464.1" width="1.3" height="4.2" fill="#222"/>
<rect x="545.8000000000001" y="464.1" width="1.3" height="5" fill="#222"/>
<g transform="translate(235 512.4)"><path d="M.6 7.300L7.200 1.200l3.600.5 1 3.500-6.300 6.600z" fill="#f3b13e" stroke="#c98518" stroke-width=".8" stroke-linejoin="round"/><circle cx="9.300" cy="3.900" r="1.300" fill="#fff7e0" stroke="#4a4a55" stroke-width=".7"/><path d="M9.600 3.200c1.700-.5 3 .9 2.400 2.700" fill="none" stroke="#4a4a55" stroke-width=".8"/></g>
<g transform="translate(538 514.3)"><path d="M.6 7.300L7.200 1.200l3.600.5 1 3.500-6.300 6.600z" fill="#f3b13e" stroke="#c98518" stroke-width=".8" stroke-linejoin="round"/><circle cx="9.300" cy="3.900" r="1.300" fill="#fff7e0" stroke="#4a4a55" stroke-width=".7"/><path d="M9.600 3.200c1.700-.5 3 .9 2.400 2.700" fill="none" stroke="#4a4a55" stroke-width=".8"/></g>
<path d="M539 490.300l2.700 2.700 6.200-5.600" fill="none" stroke="#8bbf3a" stroke-width="1.600"/>
<path d="M539 496.500l2.700 2.700 6.200-5.600" fill="none" stroke="#8bbf3a" stroke-width="1.600"/>
<rect x="354.500" y="540.500" width="11" height="11" fill="#f6f9fe" stroke="#a9bfe0" stroke-width="1"/>
<rect x="356.700" y="542.600" width="7" height="6.900" rx="1" fill="url(#gChk)" stroke="#1f4678" stroke-width="1"/></svg>
</body></html>
